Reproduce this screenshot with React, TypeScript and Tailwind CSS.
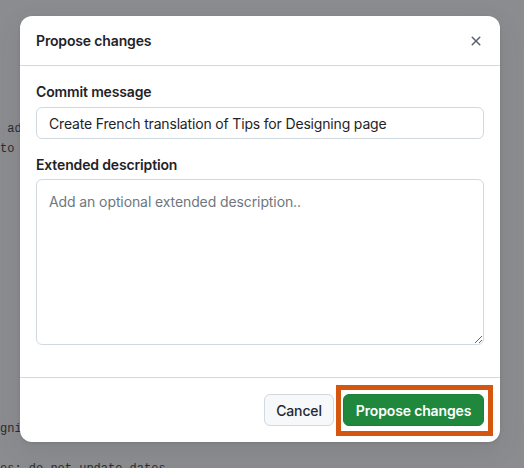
import React from "react";

export default function App() {
  const bgLines = [" ad", "to", "", "", "", "", "", "", "", "", "", "", "", "", "", "gni", "", "es: do not update dates"];
  return (
    <div className="relative h-[468px] w-[524px] overflow-hidden bg-[#8b8c8f] font-['Inter','Liberation_Sans',sans-serif]">
      <pre className="m-0 pt-[119px] font-['Liberation_Mono','DejaVu_Sans_Mono',monospace] text-[12px] leading-[20px] text-[#2a2b2d]">
        {bgLines.join("\n")}
      </pre>

      <div className="absolute left-[20px] top-[16px] w-[480px] rounded-xl bg-white tracking-[-0.15px] shadow-[0_8px_24px_rgba(66,74,83,0.12),0_1px_3px_rgba(31,35,40,0.12)]">
        <div className="flex h-[50px] items-center justify-between border-b border-[#d1d9e0] pl-4 pr-2">
          <h2 className="text-[14px] font-semibold text-[#1f2328]">Propose changes</h2>
          <button className="flex size-8 items-center justify-center rounded-md text-[#59636e]">
            <svg width="16" height="16" viewBox="0 0 16 16" fill="currentColor">
              <path d="M3.72 3.72a.75.75 0 0 1 1.06 0L8 6.94l3.22-3.22a.749.749 0 0 1 1.275.326.749.749 0 0 1-.215.734L9.06 8l3.22 3.22a.749.749 0 0 1-.326 1.275.749.749 0 0 1-.734-.215L8 9.06l-3.22 3.22a.751.751 0 0 1-1.042-.018.751.751 0 0 1-.018-1.042L6.94 8 3.72 4.78a.75.75 0 0 1 0-1.06Z" />
            </svg>
          </button>
        </div>

        <div className="flex flex-col px-4 pt-4 pb-8">
          <label className="text-[14px] font-semibold leading-5 text-[#1f2328]">Commit message</label>
          <input
            className="mt-[5px] h-8 w-full rounded-md border border-[#d1d9e0] bg-white px-3 text-[14px] tracking-[-0.17px] text-[#1f2328] outline-none"
            defaultValue="Create French translation of Tips for Designing page"
          />
          <label className="mt-4 text-[14px] font-semibold leading-5 text-[#1f2328]">Extended description</label>
          <textarea
            className="mt-1 h-[166px] w-full resize-y rounded-md border border-[#d1d9e0] bg-white px-3 pt-3 text-[14px] leading-5 tracking-[-0.1px] text-[#1f2328] outline-none placeholder:text-[#6e7781]"
            placeholder="Add an optional extended description.."
          />
        </div>

        <div className="flex justify-end gap-[9px] border-t border-[#d1d9e0] p-4">
          <button className="h-8 w-[70px] rounded-md border border-[#d1d9e0] bg-[#f6f8fa] text-[14px] font-medium text-[#25292e]">
            Cancel
          </button>
          <div className="relative">
            <button className="h-8 w-[141px] rounded-md border border-[#1a7f37] bg-[#1f883d] text-[14px] font-semibold text-white">
              Propose changes
            </button>
            <span className="pointer-events-none absolute -top-[9px] -bottom-[10px] -left-[7px] -right-[9px] border-[5px] border-[#d4560f]" />
          </div>
        </div>
      </div>
    </div>
  );
}
